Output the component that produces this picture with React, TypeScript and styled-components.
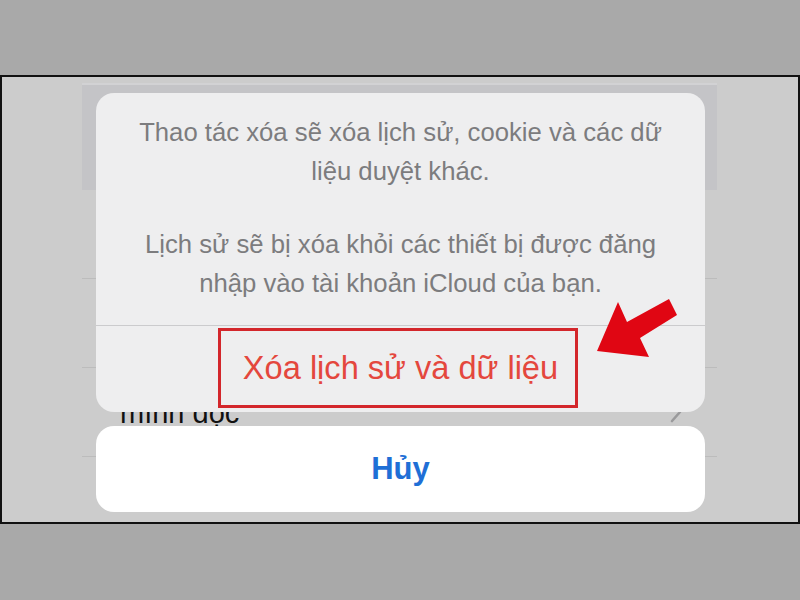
import React from "react";
import styled, { createGlobalStyle } from "styled-components";

const GlobalStyle = createGlobalStyle`
  html, body { margin: 0; padding: 0; background: #a9a9a9; }
  body { font-family: "Liberation Sans", Arial, sans-serif; }
`;

const Page = styled.div`
  width: 800px;
  height: 600px;
  display: flex;
  flex-direction: column;
  background: #a9a9a9;
  overflow: hidden;
`;

const Band = styled.div<{ $h: number }>`
  height: ${(p) => p.$h}px;
  flex: none;
  background: #a9a9a9;
`;

const Frame = styled.div`
  position: relative;
  height: 449px;
  box-sizing: border-box;
  border: 2px solid #111;
  background: #cccccc;
  overflow: hidden;
  flex: none;
`;

const BackgroundList = styled.div`
  width: 635px;
  margin-left: 80px;
  padding-top: 6px;
  display: flex;
  flex-direction: column;
`;

const HeaderBlock = styled.div`
  height: 105px;
  background: #c4c4c7;
  border-top: 2px solid #d2d2d4;
`;

const Row = styled.div`
  height: 88px;
  border-bottom: 1px solid #bcbcbc;
  display: flex;
  align-items: center;
  justify-content: space-between;
  padding: 0 34px 0 38px;
`;

const RowLabel = styled.span`
  font-size: 29px;
  color: #111;
  line-height: 32px;
  padding-top: 2px;
`;

const Overlay = styled.div`
  position: absolute;
  inset: 0;
  padding: 16px 0 0 94px;
  display: flex;
  flex-direction: column;
  gap: 14px;
`;

const Sheet = styled.div`
  width: 609px;
  background: #eeeeef;
  border-radius: 18px;
  display: flex;
  flex-direction: column;
  overflow: hidden;
`;

const Message = styled.div`
  padding: 20px 10px 22px;
  text-align: center;
  color: #7c7c7e;
  font-size: 25.7px;
  line-height: 39px;
  display: flex;
  flex-direction: column;
  gap: 34px;
`;

const Divider = styled.div`
  height: 1px;
  background: #cbcbcd;
`;

const DestructiveAction = styled.div`
  height: 86px;
  display: flex;
  align-items: center;
  justify-content: center;
`;

const Highlight = styled.div`
  width: 360px;
  height: 80px;
  box-sizing: border-box;
  border: 3px solid #d3262b;
  padding-left: 5px;
  display: flex;
  align-items: center;
  justify-content: center;
  color: #e4473d;
  font-size: 32.6px;
  margin: -2px 5px 0 0;
`;

const CancelButton = styled.div`
  width: 609px;
  height: 86px;
  background: #ffffff;
  border-radius: 18px;
  display: flex;
  align-items: center;
  justify-content: center;
  color: #1f6fd6;
  font-size: 31px;
  font-weight: 700;
`;

const Arrow = styled.svg`
  position: absolute;
  left: 0;
  top: 0;
  pointer-events: none;
`;

const Chevron = () => (
  <svg width="14" height="22" viewBox="0 0 14 22">
    <path d="M3 2 L11 11 L3 20" fill="none" stroke="#9a9a9c" strokeWidth="2.6" strokeLinecap="round" strokeLinejoin="round" />
  </svg>
);

export default function App() {
  return (
    <>
      <GlobalStyle />
      <Page>
        <Band $h={75} />
        <Frame>
          <BackgroundList>
            <HeaderBlock />
            <Row />
            <Row />
            <Row>
              <RowLabel>mình đọc</RowLabel>
              <Chevron />
            </Row>
            <Row />
          </BackgroundList>
          <Overlay>
            <Sheet>
              <Message>
                <div>
                  Thao tác xóa sẽ xóa lịch sử, cookie và các dữ
                  <br />
                  liệu duyệt khác.
                </div>
                <div>
                  Lịch sử sẽ bị xóa khỏi các thiết bị được đăng
                  <br />
                  nhập vào tài khoản iCloud của bạn.
                </div>
              </Message>
              <Divider />
              <DestructiveAction>
                <Highlight>Xóa lịch sử và dữ liệu</Highlight>
              </DestructiveAction>
            </Sheet>
            <CancelButton>Hủy</CancelButton>
          </Overlay>
          <Arrow width="796" height="445" viewBox="2 77 796 445">
            <polygon
              points="597,351 618,302 627,322 669,299 677,315 640,338 649,357"
              fill="#e00613"
            />
          </Arrow>
        </Frame>
        <Band $h={76} />
      </Page>
    </>
  );
}
